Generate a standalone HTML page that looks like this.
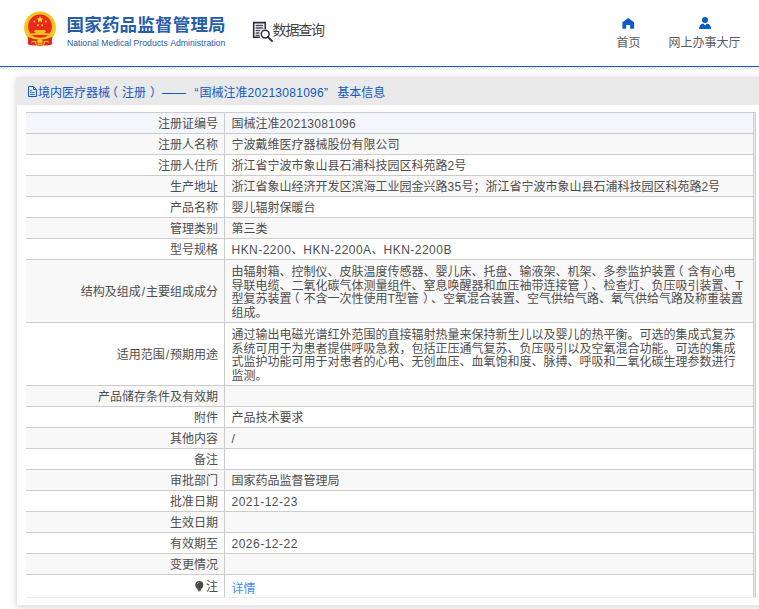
<!DOCTYPE html>
<html lang="zh-CN">
<head>
<meta charset="utf-8">
<title>国家药品监督管理局 数据查询</title>
<style>
html,body{margin:0;padding:0;}
body{width:759px;height:609px;overflow:hidden;background:#fff;position:relative;
  font-family:"Liberation Sans","Noto Sans CJK SC",sans-serif;font-size:12px;color:#333;text-spacing-trim:space-all;font-kerning:none;}
.abs{position:absolute;white-space:nowrap;}
/* header */
#hdr{position:absolute;left:0;top:0;width:759px;height:66px;background:#fff;}
#blueline{position:absolute;left:0;top:66px;width:759px;height:1px;background:#0a5cc0;}
#hatch{position:absolute;left:0;top:67px;width:759px;height:3px;
  background:repeating-linear-gradient(135deg,#fff 0,#fff 1.3px,#e0e0e0 1.3px,#e0e0e0 2.12px);}
#title{left:66.5px;top:12.2px;font-size:17.5px;line-height:26px;font-weight:bold;color:#275cab;letter-spacing:.2px;}
#sub{left:66.9px;top:36.8px;font-size:8.7px;line-height:12px;color:#275cab;}
#q{left:272.6px;top:19.7px;font-size:14px;line-height:20px;color:#444;letter-spacing:-1.2px;}
.nav{font-size:12px;line-height:16px;color:#5c5c5c;}
/* box */
#box{position:absolute;left:16px;top:77px;width:760px;height:529px;background:#fff;box-shadow:0 1px 7px rgba(0,0,0,.17);border-radius:0 0 2px 2px;}
#box:after{content:'';position:absolute;left:0;top:0;right:0;bottom:0;border:1px solid #e7e7e7;border-radius:0 0 2px 2px;pointer-events:none;}
#boxhd{position:absolute;left:0;top:0;width:100%;height:27px;background:#e9e9e9;border-bottom:1px solid #e6e9f5;z-index:2;}
#boxhd .t{top:7.5px;font-size:12px;line-height:16px;color:#1059c5;}
.d{letter-spacing:.28px;}
.v .e{display:inline;top:0;letter-spacing:.47px;}
.v .e2{letter-spacing:.5px;}
/* table */
#tb{position:absolute;left:10px;top:35px;width:729px;height:485px;border-top:1px solid #ccc;border-right:1px solid #ccc;background:#eceef6;}
.r{position:relative;width:727px;height:20px;border-bottom:1px solid #ccc;border-right:1px solid #ccc;background:#fff;box-sizing:content-box;}
.r.g{background:#f8f8f8;}
.r.b{background:#f5f6fb;}
.r.h4{height:62px;}
.r.last{height:22px;border-bottom:none;}
.l{position:absolute;left:0;top:0;width:192px;height:100%;border-right:1px solid #ccc;padding-right:6px;text-align:right;
  display:flex;align-items:center;justify-content:flex-end;white-space:nowrap;color:#4e4e4e;line-height:13.55px;}
.v{position:absolute;left:199px;top:0;right:0;height:100%;padding-left:6.5px;display:flex;align-items:center;white-space:nowrap;color:#4e4e4e;line-height:13.55px;}
.l span,.v span{display:block;position:relative;top:2px;}
.h4 .v span{top:2.2px;}
i{font-style:normal;padding:0 1px;}
b.pl,b.pr{font-weight:normal;position:relative;display:inline;}
b.pl{left:-4px;}
b.pr{left:4px;}
a{color:#3d8bf5;text-decoration:none;}
</style>
</head>
<body>
<div id="hdr">
  <svg class="abs" style="left:23px;top:11px" width="34" height="36" viewBox="0 0 34 36">
    <circle cx="17" cy="16.400" r="15.900" fill="#f6c31f"/>
    <circle cx="17" cy="15.400" r="11.900" fill="#e8291c"/>
    <path d="M4.600 25.800Q5.400 31 4.700 33.200Q10 35.300 13.500 34.300L17 35.200L20.500 34.300Q24 35.300 29.300 33.200Q28.600 31 29.400 25.800Q24 28.700 17 28.700Q10 28.700 4.600 25.800Z" fill="#dc281d"/>
    <path d="M6.300 24.300Q17 30.600 27.700 24.300" fill="none" stroke="#f6c31f" stroke-width="1.500"/>
    <path d="M17 4.900l1 2.300 2.500.2-1.900 1.650.6 2.450-2.200-1.300-2.200 1.300.6-2.450-1.900-1.650 2.500-.2z" fill="#f9d23a"/>
    <circle cx="11.300" cy="10.500" r="1.050" fill="#f9d23a"/><circle cx="22.800" cy="10.500" r="1.050" fill="#f9d23a"/>
    <circle cx="14.900" cy="14.300" r="1.050" fill="#f9d23a"/><circle cx="19.200" cy="14.300" r="1.050" fill="#f9d23a"/>
    <path d="M11.900 19.100h10.200l.9 1.700h-12zM12.300 20.800h9.400v1.500h-9.400zM8 22.300h18v1.700h-18z" fill="#f6c31f"/>
    <ellipse cx="17" cy="30.300" rx="2.700" ry="2.300" fill="#f6c31f"/>
    <path d="M8.200 31.200q2.200-1.600 4.800-.4q-1.200 2.200 1.400 2.600M25.800 31.200q-2.200-1.600-4.800-.4q1.200 2.200-1.400 2.600" fill="none" stroke="#f3b820" stroke-width="1.300"/>
    <path d="M14.800 33.600h4.400" stroke="#f3b820" stroke-width="1.300"/>
  </svg>
  <div class="abs" id="title">国家药品监督管理局</div>
  <div class="abs" id="sub">National Medical Products Administration</div>
  <svg class="abs" style="left:252px;top:21px" width="22" height="22" viewBox="0 0 22 22">
    <path d="M13.200 1.600H1.700V16.300H8" fill="none" stroke="#2d2b45" stroke-width="1.600"/>
    <path d="M13.200 .8V8" fill="none" stroke="#2d2b45" stroke-width="1.500"/>
    <path d="M3.600 4.500h7.600M3.600 7h7.600M3.600 9.500h4.800M3.600 12h4M3.600 14.400h4" stroke="#4d4b62" stroke-width="1.300"/>
    <circle cx="13.200" cy="13.100" r="3.900" fill="#fff" stroke="#2d2b45" stroke-width="1.500"/>
    <path d="M15.800 15.800L20 20" stroke="#2d2b45" stroke-width="1.900" stroke-linecap="round"/>
  </svg>
  <div class="abs" id="q">数据查询</div>
  <svg class="abs" style="left:622px;top:17px" width="13" height="13" viewBox="0 0 13 13">
    <path d="M6.200 .9L12.100 5.200V11.700H8.100V8H4.100V11.700H.4V5.200Z" fill="#0a5cc4"/>
  </svg>
  <div class="abs nav" style="left:616.500px;top:35px">首页</div>
  <svg class="abs" style="left:698px;top:16px" width="14" height="14" viewBox="0 0 14 14">
    <circle cx="7" cy="4" r="3.050" fill="#0a5cc4"/>
    <path d="M1 12.900Q1.200 8.600 4.600 7.800H5.900L7 9.800L8.400 7.800H9.600Q12.900 8.600 13.100 12.900Z" fill="#0a5cc4"/>
  </svg>
  <div class="abs nav" style="left:668.500px;top:35px">网上办事大厅</div>
</div>
<div id="blueline"></div>
<div id="hatch"></div>

<div id="box">
  <div id="boxhd">
    <svg class="abs" style="left:11px;top:9px" width="11" height="11" viewBox="0 0 11 11">
      <path d="M1.500 .5H6.500L9.500 3.500V10.500H1.500Z" fill="none" stroke="#1059c5" stroke-width="1"/>
      <path d="M6.500 .5V3.500H9.500" fill="none" stroke="#1059c5" stroke-width="1"/>
      <path d="M3 4.500H5.200M3 6.500H7.800M3 8.500H7.800" fill="none" stroke="#1059c5" stroke-width="1" opacity=".85"/>
    </svg>
    <div class="abs t" style="left:22px">境内医疗器械<b class="pl">（</b>注册<b class="pr">）</b></div>
    <div class="abs t" style="left:146px">——</div>
    <div class="abs t" style="left:178.600px">“</div>
    <div class="abs t" style="left:183.500px">国械注准<span class="d">20213081096</span>”</div>
    <div class="abs t" style="left:321.200px">基本信息</div>
  </div>
  <div id="tb">
    <div class="r b"><div class="l"><span>注册证编号</span></div><div class="v"><span>国械注准<span class="d" style="display:inline;top:0">20213081096</span></span></div></div>
    <div class="r g"><div class="l"><span>注册人名称</span></div><div class="v"><span>宁波戴维医疗器械股份有限公司</span></div></div>
    <div class="r"><div class="l"><span>注册人住所</span></div><div class="v"><span>浙江省宁波市象山县石浦科技园区科苑路2号</span></div></div>
    <div class="r g"><div class="l"><span>生产地址</span></div><div class="v"><span>浙江省象山经济开发区滨海工业园金兴路<span class="d" style="display:inline;top:0">35</span>号；浙江省宁波市象山县石浦科技园区科苑路2号</span></div></div>
    <div class="r"><div class="l"><span>产品名称</span></div><div class="v"><span>婴儿辐射保暖台</span></div></div>
    <div class="r g"><div class="l"><span>管理类别</span></div><div class="v"><span>第三类</span></div></div>
    <div class="r"><div class="l"><span>型号规格</span></div><div class="v"><span><span class="e">HKN-2200</span>、<span class="e">HKN-2200A</span>、<span class="e">HKN-2200B</span></span></div></div>
    <div class="r g h4"><div class="l"><span>结构及组成<i>/</i>主要组成成分</span></div><div class="v"><span>由辐射箱、控制仪、皮肤温度传感器、婴儿床、托盘、输液架、机架、多参监护装置<b class="pl">（</b>含有心电<br>导联电缆、二氧化碳气体测量组件、窒息唤醒器和血压袖带连接管<b class="pr">）</b>、检查灯、负压吸引装置、T<br>型复苏装置<b class="pl">（</b>不含一次性使用T型管<b class="pr">）</b>、空氧混合装置、空气供给气路、氧气供给气路及称重装置<br>组成。</span></div></div>
    <div class="r h4"><div class="l"><span>适用范围<i>/</i>预期用途</span></div><div class="v"><span>通过输出电磁光谱红外范围的直接辐射热量来保持新生儿以及婴儿的热平衡。可选的集成式复苏<br>系统可用于为患者提供呼吸急救，包括正压通气复苏、负压吸引以及空氧混合功能。可选的集成<br>式监护功能可用于对患者的心电、无创血压、血氧饱和度、脉搏、呼吸和二氧化碳生理参数进行<br>监测。</span></div></div>
    <div class="r g"><div class="l"><span>产品储存条件及有效期</span></div><div class="v"><span></span></div></div>
    <div class="r"><div class="l"><span>附件</span></div><div class="v"><span>产品技术要求</span></div></div>
    <div class="r g"><div class="l"><span>其他内容</span></div><div class="v"><span>/</span></div></div>
    <div class="r"><div class="l"><span>备注</span></div><div class="v"><span></span></div></div>
    <div class="r g"><div class="l"><span>审批部门</span></div><div class="v"><span>国家药品监督管理局</span></div></div>
    <div class="r"><div class="l"><span>批准日期</span></div><div class="v"><span class="e2">2021-12-23</span></div></div>
    <div class="r g"><div class="l"><span>生效日期</span></div><div class="v"><span></span></div></div>
    <div class="r"><div class="l"><span>有效期至</span></div><div class="v"><span class="e2">2026-12-22</span></div></div>
    <div class="r g"><div class="l"><span>变更情况</span></div><div class="v"><span></span></div></div>
    <div class="r last"><div class="l"><span><svg style="display:inline-block;vertical-align:-.6px;margin-right:2.3px" width="8.600" height="10.500" viewBox="0 0 9 11"><circle cx="4.500" cy="4.300" r="4.200" fill="#4a4a4a"/><path d="M2.600 7.500h3.800v2.200h-3.800z" fill="#4a4a4a"/><path d="M3.200 10.300h2.600" stroke="#4a4a4a" stroke-width="1"/><path d="M2.300 3.300a2.500 2.500 0 0 1 1.800-1.700" fill="none" stroke="#bbb" stroke-width=".9"/></svg>注</span></div><div class="v"><span style="top:4px"><a>详情</a></span></div></div>
  </div>
</div>
</body>
</html>
